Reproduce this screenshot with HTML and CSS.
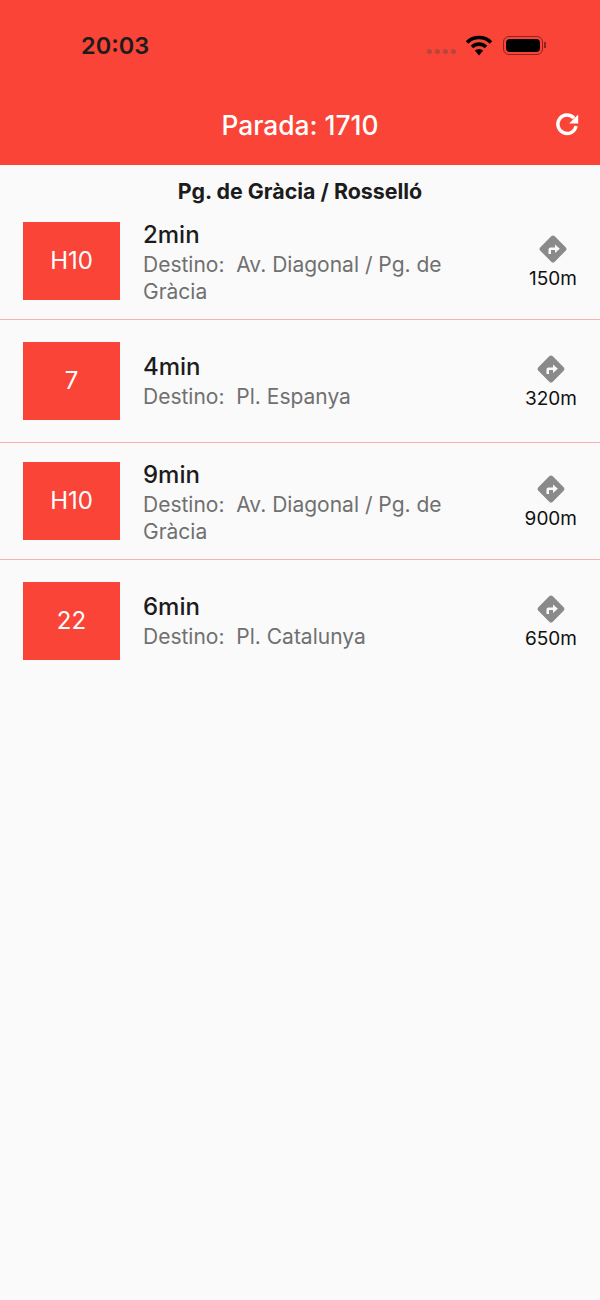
FILE: index.html
```html
<!DOCTYPE html>
<html>
<head>
    <meta charset="utf-8">
    <title>Parada: 1710</title>
    <link rel="stylesheet" href="styles.css">
</head>
<body>
    <div class="header">
        <div class="status">
            <span class="clock">20:03</span>
            <div class="status-icons">
                <div class="dots"><i></i><i></i><i></i><i></i></div>
                <svg class="wifi" width="28" height="22" viewBox="0 0 28 22">
                    <path d="M2 8.5 A17 17 0 0 1 26 8.5" fill="none" stroke="#000" stroke-width="3.6"/>
                    <path d="M7 13 A10 10 0 0 1 21 13" fill="none" stroke="#000" stroke-width="3.6"/>
                    <path d="M14 21.5 L9.8 16.6 A6 6 0 0 1 18.2 16.6 Z" fill="#000"/>
                </svg>
                <div class="battery"><div class="battery-fill"></div></div>
                <div class="battery-tip"></div>
            </div>
        </div>
        <div class="nav">
            <span></span>
            <span class="nav-title">Parada: 1710</span>
            <svg class="refresh" width="26" height="26" viewBox="0 0 26 26">
                <path d="M20 6.2 A9.2 9.2 0 1 0 22.1 14" fill="none" stroke="#fff" stroke-width="3.4"/>
                <path d="M24.2 2.5 V11.6 H15.1 Z" fill="#fff"/>
            </svg>
        </div>
    </div>

    <div class="stop-name">Pg. de Gràcia / Rosselló</div>

    <div class="row row-tall">
        <div class="line">H10</div>
        <div class="info">
            <div class="time">2min</div>
            <div class="dest">Destino:&nbsp; Av. Diagonal / Pg. de Gràcia</div>
        </div>
        <div class="dist">
            <svg class="turn" width="32" height="32" viewBox="0 0 32 32"><use href="#turn-icon"/></svg>
            <span>150m</span>
        </div>
    </div>
    <div class="row row-short">
        <div class="line">7</div>
        <div class="info">
            <div class="time">4min</div>
            <div class="dest">Destino:&nbsp; Pl. Espanya</div>
        </div>
        <div class="dist">
            <svg class="turn" width="32" height="32" viewBox="0 0 32 32"><use href="#turn-icon"/></svg>
            <span>320m</span>
        </div>
    </div>
    <div class="row row-tall">
        <div class="line">H10</div>
        <div class="info">
            <div class="time">9min</div>
            <div class="dest">Destino:&nbsp; Av. Diagonal / Pg. de Gràcia</div>
        </div>
        <div class="dist">
            <svg class="turn" width="32" height="32" viewBox="0 0 32 32"><use href="#turn-icon"/></svg>
            <span>900m</span>
        </div>
    </div>
    <div class="row row-short row-last">
        <div class="line">22</div>
        <div class="info">
            <div class="time">6min</div>
            <div class="dest">Destino:&nbsp; Pl. Catalunya</div>
        </div>
        <div class="dist">
            <svg class="turn" width="32" height="32" viewBox="0 0 32 32"><use href="#turn-icon"/></svg>
            <span>650m</span>
        </div>
    </div>

    <svg width="0" height="0" class="defs">
        <symbol id="turn-icon" viewBox="0 0 32 32">
            <rect x="5.8" y="5.8" width="20.4" height="20.4" rx="2.5" transform="rotate(45 16 16)" fill="#8a8a8a"/>
            <path d="M11.5 21 V16.5 Q11.5 14.5 13.5 14.5 H18 V11.5 L22.8 15.7 L18 19.9 V17 H14 V21 Z" fill="#fafafa"/>
        </symbol>
    </svg>
</body>
</html>
```

FILE: styles.css
```css
body {
    margin: 0;
    background-color: #fafafa;
    font-family: Inter, "Liberation Sans", sans-serif;
    color: #1c1c1c;
}

.defs {
    display: block;
}

/* top red bar */
.header {
    height: 165px;
    background-color: #f94437;
}
.status {
    height: 90px;
    display: flex;
    justify-content: space-between;
    align-items: center;
    padding-left: 81px;
    padding-right: 54px;
    box-sizing: border-box;
}
.clock {
    font-size: 23.5px;
    font-weight: 600;
}
.status-icons {
    display: flex;
    align-items: center;
}
.dots {
    display: flex;
    gap: 3px;
    margin-right: 9px;
    margin-top: 13px;
}
.dots i {
    width: 5px;
    height: 5px;
    border-radius: 50%;
    background-color: #b5473d;
}
.wifi {
    margin-right: 10px;
}
.battery {
    width: 40px;
    height: 19px;
    box-sizing: border-box;
    border: 1px solid #8f241c;
    border-radius: 6px;
    padding: 2px;
}
.battery-fill {
    height: 100%;
    background-color: #000;
    border-radius: 4px;
}
.battery-tip {
    width: 2px;
    height: 6px;
    margin-left: 1px;
    background-color: #8f241c;
}
.nav {
    height: 75px;
    display: grid;
    grid-template-columns: 1fr auto 1fr;
    align-items: center;
    padding-left: 20px;
    padding-right: 20px;
    padding-bottom: 5px;
    box-sizing: border-box;
}
.nav-title {
    color: #fff;
    font-size: 26.4px;
    font-weight: 500;
}
.refresh {
    justify-self: end;
}

.stop-name {
    height: 38px;
    line-height: 52px;
    text-align: center;
    font-size: 21.4px;
    font-weight: 700;
}

/* arrivals */
.row {
    display: flex;
    align-items: center;
    padding-left: 23px;
    padding-right: 23px;
    border-bottom: 1px solid #fbb1ab;
}
.row-tall {
    height: 116px;
}
.row-tall .info {
    margin-top: 1px;
}
.row-short {
    height: 122px;
}
.row-short .info {
    margin-bottom: 2px;
}
.row-last {
    border-bottom: none;
}
.line {
    width: 97px;
    height: 78px;
    box-sizing: border-box;
    padding-bottom: 2px;
    flex-shrink: 0;
    display: flex;
    align-items: center;
    justify-content: center;
    background-color: #f94437;
    color: #fff;
    font-size: 24px;
}
.info {
    flex: 1;
    margin-left: 23px;
    margin-right: 22px;
}
.time {
    font-size: 24px;
    font-weight: 500;
    line-height: 33px;
}
.dest {
    font-size: 21px;
    line-height: 27px;
    color: #707070;
}
.dist {
    display: flex;
    flex-direction: column;
    align-items: center;
    font-size: 19px;
    color: #111;
}
.turn {
    margin-bottom: 2px;
}
```
